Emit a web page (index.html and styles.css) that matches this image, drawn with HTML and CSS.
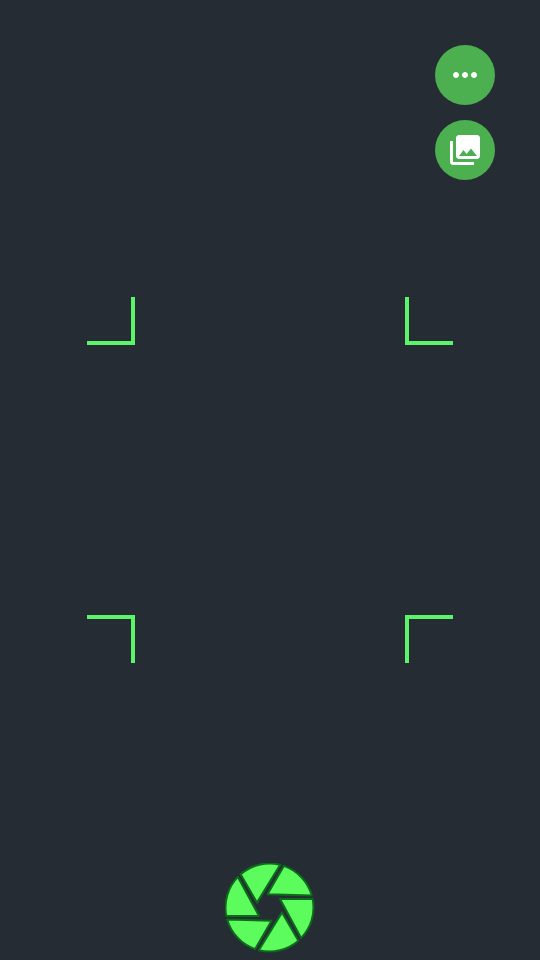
FILE: index.html
```html
<!DOCTYPE html>
<html lang="en">
<head>
<meta charset="utf-8">
<title>Scanner</title>
<link rel="stylesheet" href="styles.css">
</head>
<body>
<main class="screen">
  <div class="actions">
    <button class="fab" aria-label="More">
      <svg class="icon" viewBox="0 0 24 24"><path d="M6 10c-1.100 0-2 .9-2 2s.9 2 2 2 2-.9 2-2-.9-2-2-2zm12 0c-1.100 0-2 .9-2 2s.9 2 2 2 2-.9 2-2-.9-2-2-2zm-6 0c-1.100 0-2 .9-2 2s.9 2 2 2 2-.9 2-2-.9-2-2-2z"/></svg>
    </button>
    <button class="fab" aria-label="Gallery">
      <svg class="icon" viewBox="0 0 24 24"><path d="M22 16V4c0-1.100-.9-2-2-2H8c-1.100 0-2 .9-2 2v12c0 1.100.9 2 2 2h12c1.100 0 2-.9 2-2zm-11-4 2.030 2.710L16 11l4 5H8l3-4zM2 6v14c0 1.100.9 2 2 2h14v-2H4V6H2z"/></svg>
    </button>
  </div>
  <div class="frame">
    <div class="corner corner-a"></div>
    <div class="corner corner-b"></div>
    <div class="corner corner-c"></div>
    <div class="corner corner-d"></div>
  </div>
  <button class="shutter" aria-label="Capture">
    <svg viewBox="-44.500 -44.500 90 90" width="90" height="90">
      <defs>
        <path id="blade" d="M10.500-8.400H43.200A44 44 0 0 1 31.600 30.600Z"/>
      </defs>
      <g class="blades">
        <use href="#blade"/>
        <use href="#blade" transform="rotate(60)"/>
        <use href="#blade" transform="rotate(120)"/>
        <use href="#blade" transform="rotate(180)"/>
        <use href="#blade" transform="rotate(240)"/>
        <use href="#blade" transform="rotate(300)"/>
      </g>
    </svg>
  </button>
</main>
</body>
</html>
```
FILE: styles.css
```css
* { box-sizing: border-box; }
html, body { margin: 0; height: 100%; }
body { background: #262c33; overflow: hidden; }
.screen { display: flex; flex-direction: column; height: 960px; width: 540px; }
.actions { display: flex; flex-direction: column; align-items: flex-end; gap: 15px; padding: 45px 45px 0 0; }
.fab { width: 60px; height: 60px; padding: 0; border: 0; border-radius: 50%; background: #4caf50; display: flex; align-items: center; justify-content: center; }
.icon { width: 36px; height: 36px; fill: #fff; display: block; }
.frame { display: grid; grid-template-columns: 48px 48px; grid-template-rows: 48px 48px; justify-content: space-between; row-gap: 270px; width: 366px; margin: 117px auto 0; }
.corner { border: 0 solid #5cf56a; }
.corner-a { border-right-width: 4px; border-bottom-width: 4px; }
.corner-b { border-left-width: 4px; border-bottom-width: 4px; }
.corner-c { border-right-width: 4px; border-top-width: 4px; }
.corner-d { border-left-width: 4px; border-top-width: 4px; }
.shutter { display: block; width: 90px; height: 90px; margin: 200px auto 0; padding: 0; border: 0; background: none; }
.shutter svg { display: block; }
.blades { fill: #5cfc5c; stroke: #0e6a1c; stroke-width: 2; stroke-linejoin: round; }
```
